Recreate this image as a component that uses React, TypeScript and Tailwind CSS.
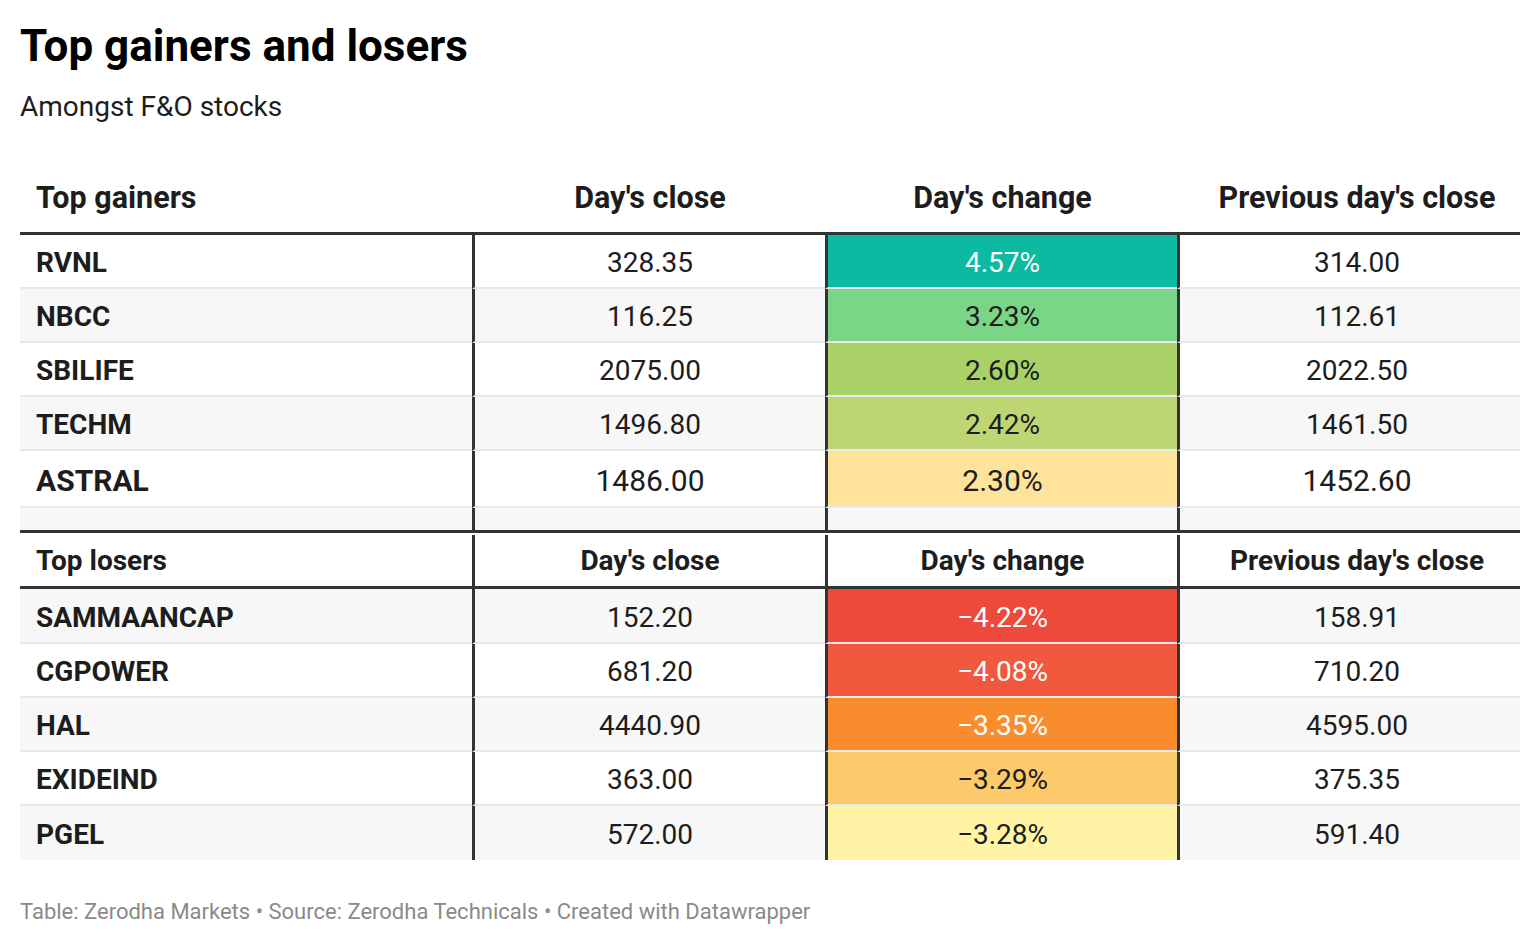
import React from 'react';

type Row = {
  name: string;
  close: string;
  change: string;
  prev: string;
  bg: string;
  light?: boolean;
};

const gainers: Row[] = [
  { name: 'RVNL', close: '328.35', change: '4.57%', prev: '314.00', bg: 'bg-[#0bbaa1]', light: true },
  { name: 'NBCC', close: '116.25', change: '3.23%', prev: '112.61', bg: 'bg-[#7ad686]' },
  { name: 'SBILIFE', close: '2075.00', change: '2.60%', prev: '2022.50', bg: 'bg-[#a9d168]' },
  { name: 'TECHM', close: '1496.80', change: '2.42%', prev: '1461.50', bg: 'bg-[#bdd673]' },
  { name: 'ASTRAL', close: '1486.00', change: '2.30%', prev: '1452.60', bg: 'bg-[#fee39b]' },
];

const losers: Row[] = [
  { name: 'SAMMAANCAP', close: '152.20', change: '\u22124.22%', prev: '158.91', bg: 'bg-[#ee4a3b]', light: true },
  { name: 'CGPOWER', close: '681.20', change: '\u22124.08%', prev: '710.20', bg: 'bg-[#f0593d]', light: true },
  { name: 'HAL', close: '4440.90', change: '\u22123.35%', prev: '4595.00', bg: 'bg-[#f98d2e]', light: true },
  { name: 'EXIDEIND', close: '363.00', change: '\u22123.29%', prev: '375.35', bg: 'bg-[#fdca6b]' },
  { name: 'PGEL', close: '572.00', change: '\u22123.28%', prev: '591.40', bg: 'bg-[#fff4a5]' },
];

const grid = 'grid grid-cols-[452px_353px_352px_343px]';
const vline = 'border-l-[3px] border-[#333333]';

const DataRow = ({
  row,
  striped,
  height,
  big,
  last,
}: {
  row: Row;
  striped: boolean;
  height: string;
  big?: boolean;
  last?: boolean;
}) => {
  const base = striped ? 'bg-[#f7f7f7]' : 'bg-white';
  const size = big ? 'text-[30px]' : 'text-[28px]';
  const line = last ? '' : 'border-b-2 border-b-[#e9e9e9]';
  return (
    <div className={`${grid} ${height} ${size} ${base}`}>
      <div className={`flex items-center pl-[16px] pt-[4px] font-bold ${line}`}>{row.name}</div>
      <div className={`flex items-center justify-center pt-[4px] ${vline} ${line}`}>{row.close}</div>
      <div
        className={`flex items-center justify-center pt-[4px] ${vline} ${row.bg} ${line} ${
          row.light ? 'text-white' : 'text-[#1d1d1d]'
        }`}
      >
        {row.change}
      </div>
      <div className={`flex items-center justify-center pl-[14px] pt-[4px] ${vline} ${line}`}>{row.prev}</div>
    </div>
  );
};

const App = () => {
  return (
    <div className="min-h-screen bg-white px-[20px] pt-[20px] font-['Roboto',sans-serif] text-[#1d1d1d]">
      <h1 className="text-[44px] font-bold leading-[52px] text-black">Top gainers and losers</h1>
      <p className="mt-[17px] text-[28px] leading-[36px] text-[#1d1d1d]">Amongst F&amp;O stocks</p>

      <div className="mt-[45px] w-[1500px]">
        {/* gainers header */}
        <div className={`${grid} h-[65px] border-b-[3px] border-b-[#333333] pb-[6px] text-[30.5px] font-bold`}>
          <div className="flex items-center pl-[16px]">Top gainers</div>
          <div className="flex items-center justify-center pl-[3px]">Day's close</div>
          <div className="flex items-center justify-center pl-[3px]">Day's change</div>
          <div className="flex items-center justify-center pl-[17px]">Previous day's close</div>
        </div>

        {gainers.map((r, i) => (
          <DataRow
            key={r.name}
            row={r}
            striped={i % 2 === 1}
            height={i === 4 ? 'h-[57px]' : 'h-[54px]'}
            big={i === 4}
          />
        ))}

        {/* spacer row */}
        <div className={`${grid} h-[22px] bg-[#f7f7f7]`}>
          <div />
          <div className={vline} />
          <div className={vline} />
          <div className={vline} />
        </div>

        {/* losers header */}
        <div
          className={`${grid} h-[59px] border-y-[3px] border-y-[#333333] pt-[2px] text-[28px] font-bold`}
        >
          <div className="flex items-center pl-[16px]">Top losers</div>
          <div className={`flex items-center justify-center ${vline}`}>Day's close</div>
          <div className={`flex items-center justify-center ${vline}`}>Day's change</div>
          <div className={`flex items-center justify-center pl-[14px] ${vline}`}>Previous day's close</div>
        </div>

        {losers.map((r, i) => (
          <DataRow
            key={r.name}
            row={r}
            striped={i % 2 === 0}
            height={i === 0 ? 'h-[55px]' : 'h-[54px]'}
            last={i === 4}
          />
        ))}
      </div>

      <p className="mt-[38px] text-[22px] leading-[28px] text-[#8a8a8a]">
        Table: Zerodha Markets • Source: Zerodha Technicals • Created with Datawrapper
      </p>
    </div>
  );
};

export default App;
